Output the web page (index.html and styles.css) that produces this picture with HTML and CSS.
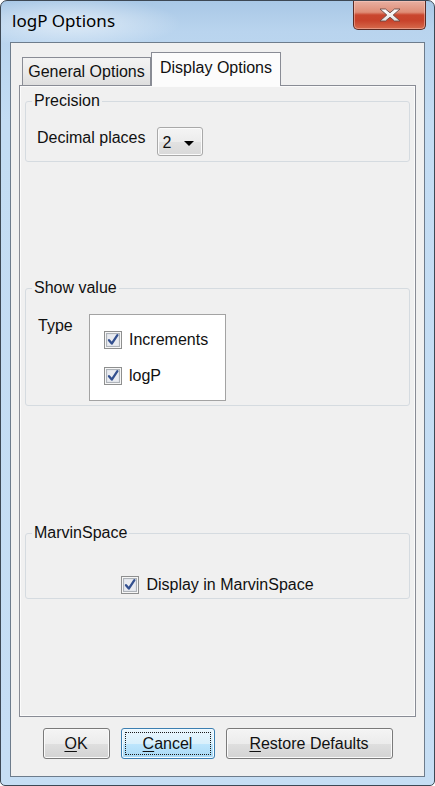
FILE: index.html
```html
<!DOCTYPE html>
<html>
<head>
<meta charset="utf-8">
<title>logP Options</title>
<link rel="stylesheet" href="styles.css">
</head>
<body>
<div class="window">
  <div class="titlebar">
    <span class="title">logP Options</span>
    <div class="close">
      <svg width="24" height="14" viewBox="0 0 24 14">
        <defs>
          <linearGradient id="xg" x1="0" y1="0" x2="0" y2="1">
            <stop offset="0" stop-color="#ffffff"/>
            <stop offset="1" stop-color="#e4e4e4"/>
          </linearGradient>
        </defs>
        <polygon points="2,1 7.5,1 12,4.8 16.5,1 22,1 15.2,7 22,13 16.5,13 12,9.2 7.5,13 2,13 8.8,7" fill="url(#xg)" stroke="#6a4a45" stroke-width="0.9" stroke-linejoin="round"/>
      </svg>
    </div>
  </div>
  <div class="client">
    <div class="tabs">
      <div class="tab">General Options</div>
      <div class="tab selected">Display Options</div>
    </div>
    <div class="panel">
      <fieldset class="group g1">
        <legend>Precision</legend>
        <div class="prec-row">
          <span class="label dec">Decimal places</span>
          <div class="combo">
            <span class="combo-val">2</span>
            <svg class="arrow" width="10" height="5" viewBox="0 0 10 5"><polygon points="0,0 10,0 5,5" fill="#000"/></svg>
          </div>
        </div>
      </fieldset>
      <fieldset class="group g2">
        <legend>Show value</legend>
        <div class="type-row">
          <span class="label type">Type</span>
          <div class="box">
            <div class="check">
              <svg class="cb" width="18" height="18" viewBox="0 0 18 18"><rect x="0.5" y="0.5" width="17" height="17" fill="#f6f6f6" stroke="#8e8f8f"/><rect x="2.5" y="2.5" width="13" height="13" fill="#dadee6" stroke="#aeb3b9"/><rect x="3.5" y="3.5" width="11" height="11" fill="#e9ebf0"/><path d="M5 9.2 L7.8 12.6 L13.4 4.2" fill="none" stroke="#33508f" stroke-width="2.3" stroke-linejoin="round" stroke-linecap="round"/></svg>
              <span>Increments</span>
            </div>
            <div class="check">
              <svg class="cb" width="18" height="18" viewBox="0 0 18 18"><rect x="0.5" y="0.5" width="17" height="17" fill="#f6f6f6" stroke="#8e8f8f"/><rect x="2.5" y="2.5" width="13" height="13" fill="#dadee6" stroke="#aeb3b9"/><rect x="3.5" y="3.5" width="11" height="11" fill="#e9ebf0"/><path d="M5 9.2 L7.8 12.6 L13.4 4.2" fill="none" stroke="#33508f" stroke-width="2.3" stroke-linejoin="round" stroke-linecap="round"/></svg>
              <span>logP</span>
            </div>
          </div>
        </div>
      </fieldset>
      <fieldset class="group g3">
        <legend>MarvinSpace</legend>
        <div class="center-row">
          <div class="check">
            <svg class="cb" width="18" height="18" viewBox="0 0 18 18"><rect x="0.5" y="0.5" width="17" height="17" fill="#f6f6f6" stroke="#8e8f8f"/><rect x="2.5" y="2.5" width="13" height="13" fill="#dadee6" stroke="#aeb3b9"/><rect x="3.5" y="3.5" width="11" height="11" fill="#e9ebf0"/><path d="M5 9.2 L7.8 12.6 L13.4 4.2" fill="none" stroke="#33508f" stroke-width="2.3" stroke-linejoin="round" stroke-linecap="round"/></svg>
            <span>Display in MarvinSpace</span>
          </div>
        </div>
      </fieldset>
    </div>
    <div class="buttons">
      <div class="btn ok"><span><u>O</u>K</span></div>
      <div class="btn cancel"><span class="focus"><u>C</u>ancel</span></div>
      <div class="btn restore"><span><u>R</u>estore Defaults</span></div>
    </div>
  </div>
</div>
</body>
</html>
```

FILE: styles.css
```css
html, body {
  margin: 0;
  padding: 0;
  background: #ffffff;
}

.window {
  width: 435px;
  height: 786px;
  box-sizing: border-box;
  border: 1px solid #3d4854;
  border-radius: 7px 7px 5px 5px;
  background:
    radial-gradient(ellipse 110px 26px at 70px 22px, rgba(255,255,255,0.55), rgba(255,255,255,0) 100%),
    linear-gradient(180deg, #a9c8e6 0px, #b9d4ee 30px, #c3dcf3 120px, #c6def4 100%);
  display: flex;
  flex-direction: column;
  font-family: "Liberation Sans", Arial, sans-serif;
  font-size: 16px;
  color: #111;
  overflow: hidden;
}

.titlebar {
  height: 41px;
  flex: none;
  display: flex;
  align-items: flex-start;
  box-sizing: border-box;
}

.title {
  font-family: "Noto Sans", "Open Sans", sans-serif;
  font-size: 17px;
  line-height: 20px;
  color: #000;
  margin-left: 11px;
  margin-top: 10px;
}

.close {
  margin-left: auto;
  margin-right: 8px;
  width: 73px;
  height: 29px;
  box-sizing: border-box;
  border: 1px solid #5a2b24;
  border-top: none;
  border-radius: 0 0 5px 5px;
  background: linear-gradient(180deg, #e8b0a2 0%, #df8d76 40%, #c9462e 50%, #c8432b 70%, #d56a4c 100%);
  box-shadow: inset 0 0 0 1px rgba(255, 210, 200, 0.45);
  display: flex;
  align-items: center;
  justify-content: center;
}

.client {
  flex: 1;
  margin: 0 9px 8px 9px;
  border: 1px solid #6d7c8c;
  background: #f0f0f0;
  display: flex;
  flex-direction: column;
  padding: 9px 8px 0 8px;
  min-height: 0;
}

.tabs {
  display: flex;
  align-items: flex-end;
  padding-left: 3px;
  flex: none;
}

.tab {
  box-sizing: border-box;
  border: 1px solid #898c95;
  border-bottom: none;
  display: flex;
  align-items: center;
  justify-content: center;
  line-height: 18px;
}

.tab:not(.selected) {
  width: 129px;
  height: 28px;
  background: linear-gradient(180deg, #f3f3f3 0%, #ebebeb 50%, #dedede 100%);
  padding-top: 1px;
}

.tab.selected {
  width: 130px;
  height: 34px;
  margin-bottom: -1px;
  background: #fcfcfc;
  position: relative;
  z-index: 1;
  padding-bottom: 3px;
}

.panel {
  flex: 1;
  border: 1px solid #898c95;
  box-shadow: inset 0 0 0 1px #fbfbfb;
  background: #f0f0f0;
  padding: 7px 5px 0 5px;
  display: flex;
  flex-direction: column;
  min-height: 0;
}

.group {
  margin: 0;
  padding: 0;
  border: 1px solid #d5dbe0;
  border-radius: 3px;
  min-width: 0;
}

.group legend {
  font-size: 16px;
  line-height: 16px;
  padding: 0 2px;
  margin-left: 6px;
}

.label {
  line-height: 18px;
}

.prec-row {
  display: flex;
  align-items: flex-start;
  padding: 18px 0 5px 11px;
}

.dec {
  margin-top: 2px;
}

.combo {
  margin-left: 12px;
  width: 46px;
  height: 29px;
  box-sizing: border-box;
  border: 1px solid #a9a9a9;
  border-radius: 3px;
  background: linear-gradient(180deg, #f4f4f4 0%, #ececec 50%, #e2e2e2 51%, #d9d9d9 100%);
  box-shadow: inset 0 0 0 1px #fbfbfb;
  display: flex;
  align-items: center;
  padding-left: 4px;
  padding-top: 3px;
}

.combo-val {
  line-height: 18px;
}

.arrow {
  margin-left: auto;
  margin-right: 8px;
}

.g2 {
  margin-top: 118px;
}

.type-row {
  display: flex;
  align-items: flex-start;
  padding: 18px 0 4px 12px;
}

.type {
  margin-top: 3px;
  width: 51px;
}

.box {
  width: 137px;
  box-sizing: border-box;
  border: 1px solid #a3a3a3;
  background: #ffffff;
  padding: 16px 0 15px 14px;
  display: flex;
  flex-direction: column;
  gap: 18px;
}

.check {
  display: flex;
  align-items: center;
  gap: 7px;
  line-height: 18px;
}

.cb {
  flex: none;
  display: block;
}

.g3 {
  margin-top: 119px;
}

.center-row {
  display: flex;
  justify-content: center;
  padding: 35px 0 4px 0;
}

.buttons {
  flex: none;
  display: flex;
  justify-content: center;
  gap: 11px;
  padding: 11px 0 17px 0;
}

.btn {
  height: 31px;
  box-sizing: border-box;
  border: 1px solid #7a7a7a;
  border-radius: 3px;
  background: linear-gradient(180deg, #f4f4f4 0%, #ececec 50%, #dfdfdf 51%, #d3d3d3 100%);
  box-shadow: inset 0 0 0 1px #fafafa;
  display: flex;
  align-items: center;
  justify-content: center;
  line-height: 18px;
}

.ok { width: 67px; }
.cancel {
  width: 94px;
  border-color: #3c7fb1;
  background: linear-gradient(180deg, #eaf6fd 0%, #d9f0fc 50%, #bee6fd 51%, #a7d9f5 100%);
  box-shadow: inset 0 0 0 1px #f2faff;
  padding: 3px;
}
.restore { width: 167px; }

.focus {
  flex: 1;
  align-self: stretch;
  display: flex;
  align-items: center;
  justify-content: center;
  border: 1px dotted #1a1a1a;
}

u {
  text-decoration: underline;
  text-underline-offset: 2px;
}
```
